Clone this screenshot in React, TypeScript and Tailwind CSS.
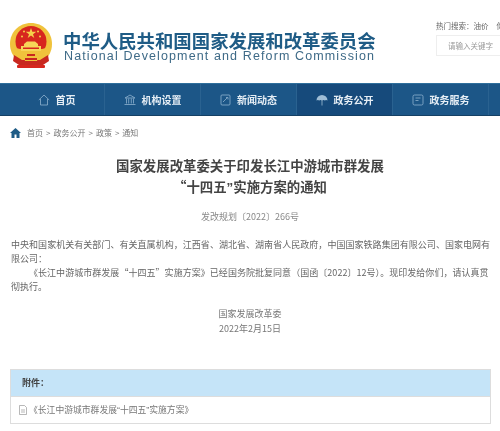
const cjk = { fontFamily: '"Noto Sans CJK SC", "Liberation Sans", sans-serif' };
const latin = { fontFamily: '"Liberation Sans", sans-serif' };

function Emblem() {
  return (
    <svg width="44" height="47" viewBox="0 0 44 47" className="shrink-0">
      <path d="M22 1C10 1 1 10 1 22c0 7 3 12 7 16h28c4-4 7-9 7-16C43 10 34 1 22 1z" fill="#f0c33c" />
      <circle cx="22" cy="19.500" r="15.500" fill="#d7261e" />
      <path d="M7 26c3 7 8 12 15 12s12-5 15-12l-4 1H11z" fill="#f0c33c" />
      <path d="M22 6l1.300 3.800h4l-3.300 2.400 1.300 3.800-3.300-2.400-3.300 2.400 1.300-3.800-3.300-2.400h4z" fill="#f5d04a" />
      <circle cx="15" cy="9.500" r="1" fill="#f5d04a" />
      <circle cx="29" cy="9.500" r="1" fill="#f5d04a" />
      <circle cx="13" cy="14.500" r="1" fill="#f5d04a" />
      <circle cx="31" cy="14.500" r="1" fill="#f5d04a" />
      <path d="M15 24h14v-2l-3-2.500h-8L15 22z" fill="#f7d558" />
      <rect x="12" y="24" width="20" height="5" fill="#f7d558" />
      <rect x="14" y="25.500" width="16" height="1.500" fill="#d7261e" />
      <path d="M5 33l8 5h18l8-5 1 6-6 4H10l-6-4z" fill="#c8281f" />
      <path d="M14 30h16l-2 9H16z" fill="#f0c33c" />
      <path d="M18 32h8v2h-8zM16 36h12v2H16z" fill="#c8281f" />
      <rect x="8" y="43" width="28" height="3" rx="1" fill="#d7261e" />
    </svg>
  );
}

function HomeOutline() {
  return (
    <svg width="12" height="12" viewBox="0 0 12 12" fill="none" stroke="#8fb3cf" strokeWidth="0.8">
      <path d="M0.800 6L6 1l5.200 5M2.500 5v6h7V5" />
    </svg>
  );
}
function BankIcon() {
  return (
    <svg width="12" height="12" viewBox="0 0 12 12" fill="none" stroke="#8fb3cf" strokeWidth="0.8">
      <path d="M1 4l5-3 5 3zM2.500 4.500v5M4.700 4.500v5M7.300 4.500v5M9.500 4.500v5M0.500 10.500h11" />
    </svg>
  );
}
function NewsIcon() {
  return (
    <svg width="11" height="12" viewBox="0 0 11 12" fill="none" stroke="#8fb3cf" strokeWidth="0.8">
      <rect x="1" y="1" width="9" height="10" rx="1" />
      <path d="M3 8l4-4M6 3.500h2v2" />
    </svg>
  );
}
function TreeIcon() {
  return (
    <svg width="12" height="12" viewBox="0 0 12 12" fill="#9fbdd5">
      <path d="M0.500 6.500a5.500 5.500 0 0 1 11 0c-1-.8-1.800-.8-2.700 0-.9-.8-1.900-.8-2.800 0-.9-.8-1.900-.8-2.800 0-.9-.8-1.700-.8-2.700 0z" />
      <rect x="5.600" y="6" width="0.800" height="5.500" />
    </svg>
  );
}
function ServiceIcon() {
  return (
    <svg width="12" height="12" viewBox="0 0 12 12" fill="none" stroke="#8fb3cf" strokeWidth="0.8">
      <rect x="1" y="1" width="10" height="10" rx="1.500" />
      <path d="M3.500 4h5M3.500 6.500h3" />
    </svg>
  );
}

function NavItem({ icon, label, active }: { icon: React.ReactNode; label: string; active?: boolean }) {
  return (
    <div
      className={`flex h-full w-[96px] items-center justify-center gap-[6px] border-r border-[#2a6290] ${
        active ? "bg-[#164a7b]" : ""
      }`}
    >
      {icon}
      <span className="text-[10px] font-bold text-[#e6eef5]">{label}</span>
    </div>
  );
}

export default function App() {
  return (
    <div className="h-[431px] w-[500px] overflow-hidden bg-white blur-[0.5px]" style={cjk}>
      <header className="flex h-[83px]">
        <div className="flex items-start pl-[9px] pt-[22px]">
          <Emblem />
        </div>
        <div className="ml-[10px] w-[320px] shrink-0 pt-[32px]">
          <div className="whitespace-nowrap text-[18.400px] leading-[17px] font-bold text-[#1f5c86]">
            中华人民共和国国家发展和改革委员会
          </div>
          <div
            className="whitespace-nowrap pl-px text-[12.500px] leading-[14px] tracking-[1.120px] text-[#3e6a87]"
            style={latin}
          >
            National Development and Reform Commission
          </div>
        </div>
        <div className="ml-[53px] w-[64px] shrink-0 pt-[20px]">
          <div className="whitespace-nowrap text-[7.500px] leading-[11px] text-[#666]">
            热门搜索：油价<span className="ml-[8px]">你</span>
          </div>
          <div className="mt-[4px] flex h-[21px] items-center border-y border-l border-[#eeeeee] pl-[11px] whitespace-nowrap text-[7.500px] text-[#999]">
            请输入关键字
          </div>
        </div>
      </header>

      <nav className="flex h-[33px] border-t border-b border-t-[#2f6f9c] border-b-[#154064] bg-[#1c5687] pl-[9px]">
        <NavItem icon={<HomeOutline />} label="首页" />
        <NavItem icon={<BankIcon />} label="机构设置" />
        <NavItem icon={<NewsIcon />} label="新闻动态" />
        <NavItem icon={<TreeIcon />} label="政务公开" active />
        <NavItem icon={<ServiceIcon />} label="政务服务" />
      </nav>

      <div className="flex h-[34px] items-center gap-[3px] pl-[10px] text-[8px] text-[#777]">
        <svg width="11" height="10" viewBox="0 0 11 10" fill="#1f5c86" className="mr-[3px]">
          <path d="M5.500 0L0 5h1.500v5h3V6.500h2V10h3V5H11z" />
        </svg>
        <span>首页</span>
        <span>&gt;</span>
        <span>政务公开</span>
        <span>&gt;</span>
        <span>政策</span>
        <span>&gt;</span>
        <span>通知</span>
      </div>

      <main>
        <h1 className="mt-[5px] text-center text-[13.400px] leading-[21px] font-bold text-[#444]">
          国家发展改革委关于印发长江中游城市群发展
          <br />
          “十四五<span style={latin}>”</span>实施方案的通知
        </h1>
        <p className="mt-[12px] text-center text-[9px] leading-[14px] text-[#888]">发改规划〔2022〕266号</p>

        <div className="mt-[14px] pl-[11px] pr-[8px] text-[9px] leading-[14px] tracking-[0.040px] text-[#666]">
          <p>中央和国家机关有关部门、有关直属机构，江西省、湖北省、湖南省人民政府，中国国家铁路集团有限公司、国家电网有限公司：</p>
          <p className="indent-[18px]">《长江中游城市群发展“十四五”实施方案》已经国务院批复同意（国函〔2022〕12号）。现印发给你们，请认真贯彻执行。</p>
        </div>

        <div className="mt-[12px] text-center text-[9px] leading-[15px] text-[#777]">
          <p>国家发展改革委</p>
          <p>2022年2月15日</p>
        </div>

        <section className="mx-[10px] mt-[33px] w-[481px] border border-[#dddddd]">
          <div className="flex h-[26px] items-center bg-[#c5e4f8] pl-[11px] text-[9px] font-bold text-[#444]">附件：</div>
          <div className="flex h-[27px] items-center border-t border-[#dddddd] pl-[8px] text-[8.800px] text-[#777]">
            <svg width="8" height="10" viewBox="0 0 8 10" fill="none" stroke="#999" strokeWidth="0.7" className="mr-[2px]">
              <path d="M0.500 0.500h5l2 2v7h-7zM2 5h4M2 7h4" />
            </svg>
            <span>
              《长江中游城市群发展<span style={latin}>“</span>十四五<span style={latin}>”</span>实施方案》
            </span>
          </div>
        </section>
      </main>
    </div>
  );
}
